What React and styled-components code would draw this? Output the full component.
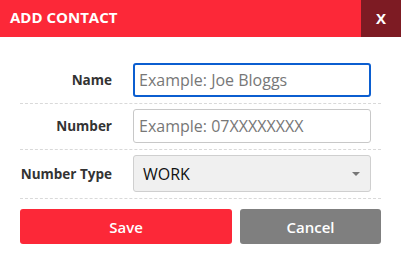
import React from 'react';
import styled, { createGlobalStyle } from 'styled-components';

const GlobalStyle = createGlobalStyle`
	body {
		margin: 0;
		background: #fff;
		font-family: "Open Sans", "Liberation Sans", sans-serif;
	}
`;

const Modal = styled.div`
	width: 401px;
	height: 263px;
	background: #fff;
`;

const Header = styled.div`
	display: flex;
	height: 37px;
	background: #fc2838;
	color: #fff;
`;

const Title = styled.h2`
	flex: 1;
	margin: 0;
	padding-left: 10px;
	font-size: 15px;
	font-weight: 700;
	line-height: 35px;
`;

const Close = styled.button`
	width: 40px;
	border: 0;
	background: #7d1b23;
	color: #fff;
	font-family: inherit;
	font-size: 15px;
	font-weight: 700;
	padding: 0 0 2px;
`;

const Body = styled.div`
	padding: 26px 20px 0;
`;

const Row = styled.div`
	display: flex;
	align-items: center;
	gap: 21px;
	padding-bottom: 6px;
	margin-bottom: 5px;
	border-bottom: 1px dashed #d9d9d9;
`;

const Label = styled.label`
	width: 92px;
	text-align: right;
	font-size: 13.5px;
	font-weight: 700;
	color: #333;
`;

const Input = styled.input`
	box-sizing: border-box;
	width: 238px;
	height: 34px;
	padding: 0 ${p => (p.focused ? 4 : 5)}px;
	border: ${p => (p.focused ? '2px solid #0b5ed0' : '1px solid #c8c8c8')};
	border-radius: 3px;
	font-family: inherit;
	font-size: 16px;
	color: #333;
	outline: none;
	&::placeholder {
		color: #777;
	}
`;

const Select = styled.div`
	box-sizing: border-box;
	display: flex;
	align-items: center;
	justify-content: space-between;
	width: 238px;
	height: 37px;
	padding: 0 10px 0 9px;
	border: 1px solid #cfcfcf;
	border-radius: 3px;
	background: #f0f0f0;
	font-size: 16px;
	color: #111;
`;

const Caret = styled.span`
	width: 0;
	height: 0;
	border-left: 4px solid transparent;
	border-right: 4px solid transparent;
	border-top: 4px solid #777;
	margin-top: 1px;
`;

const Actions = styled.div`
	display: flex;
	gap: 8px;
	margin-top: 10px;
`;

const Button = styled.button`
	flex: ${p => (p.width ? `0 0 ${p.width}px` : '1')};
	height: 35px;
	border: 0;
	border-radius: 3px;
	background: ${p => p.bg};
	color: #fff;
	font-family: inherit;
	font-size: 15px;
	font-weight: 600;
`;

export default function App() {
	return (
		<Modal>
			<GlobalStyle />
			<Header>
				<Title>ADD CONTACT</Title>
				<Close>X</Close>
			</Header>
			<Body>
				<Row>
					<Label>Name</Label>
					<Input focused placeholder="Example: Joe Bloggs" />
				</Row>
				<Row>
					<Label>Number</Label>
					<Input placeholder="Example: 07XXXXXXXX" />
				</Row>
				<Row>
					<Label>Number Type</Label>
					<Select>
						WORK
						<Caret />
					</Select>
				</Row>
				<Actions>
					<Button width={212} bg="#fc2838">Save</Button>
					<Button bg="#7f7f7f">Cancel</Button>
				</Actions>
			</Body>
		</Modal>
	);
}
